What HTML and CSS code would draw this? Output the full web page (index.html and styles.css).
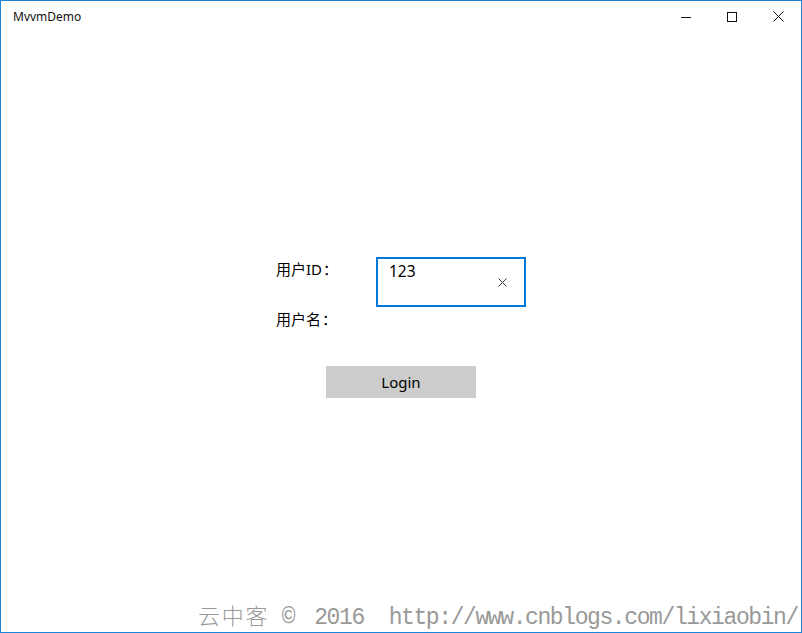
FILE: index.html
```html
<!DOCTYPE html>
<html lang="zh-CN">
<head>
    <meta charset="UTF-8">
    <title>MvvmDemo</title>
    <link rel="stylesheet" href="styles.css">
</head>
<body>
<div class="window">
    <div class="titlebar">
        <span class="title">MvvmDemo</span>
        <div class="controls">
            <span class="ctrl"><svg width="10" height="10" viewBox="0 0 10 10"><path d="M0 5.5H10" stroke="#111" stroke-width="1"/></svg></span>
            <span class="ctrl"><svg width="10" height="10" viewBox="0 0 10 10"><rect x="0.5" y="0.5" width="9" height="9" fill="none" stroke="#111" stroke-width="1"/></svg></span>
            <span class="ctrl"><svg width="11" height="11" viewBox="0 0 11 11"><path d="M0.5 0.5L10.5 10.5M10.5 0.5L0.5 10.5" stroke="#111" stroke-width="1"/></svg></span>
        </div>
    </div>
    <div class="content">
        <div class="form">
            <div class="row">
                <label class="label">用户ID<span class="colon">：</span></label>
                <div class="textbox">
                    <span class="value">123</span>
                    <svg class="clear" width="9" height="9" viewBox="0 0 9 9"><path d="M0.5 0.5L8.5 8.5M8.5 0.5L0.5 8.5" stroke="#333" stroke-width="1"/></svg>
                </div>
            </div>
            <div class="row row2">
                <label class="label">用户名<span class="colon">：</span></label>
            </div>
            <div class="btnrow">
                <button class="login">Login</button>
            </div>
        </div>
    </div>
    <div class="watermark"><span class="cjk">云中客</span> <span class="copy">©</span> 2016  http://www.cnblogs.com/lixiaobin/</div>
</div>
</body>
</html>
```

FILE: styles.css
```css
*{margin:0;padding:0;box-sizing:border-box;}
body{width:802px;height:633px;overflow:hidden;background:#fff;font-family:"Noto Sans","Noto Sans CJK SC",sans-serif;color:#000;}
.window{position:relative;width:802px;height:633px;border:1px solid #1a84d8;background:#fff;}
.titlebar{height:31px;display:flex;align-items:center;justify-content:space-between;}
.title{padding-left:12px;font-size:12px;color:#111;line-height:31px;}
.controls{display:flex;height:31px;}
.ctrl{width:46px;height:31px;display:flex;align-items:center;justify-content:center;}
.content{padding-top:225px;}
.form{width:250px;margin:0 auto;}
.row{display:flex;height:50px;}
.label{width:100px;font-size:15px;line-height:20px;padding-top:2px;}
.colon{font-family:"Noto Sans CJK TC",sans-serif;margin-left:1px;}
.textbox{width:150px;height:50px;border:2px solid #0078d7;display:flex;justify-content:space-between;padding:2px 17px 0 11px;position:relative;}
.value{font-size:15.5px;line-height:20px;}
.clear{margin-top:17px;}
.row2{height:59px;}
.btnrow{display:flex;justify-content:center;}
.login{width:150px;height:32px;border:none;background:#ccc;font-family:"Noto Sans",sans-serif;font-size:15px;color:#000;}
.watermark{position:absolute;left:197px;top:604px;font-family:"Liberation Mono","Noto Sans CJK SC",monospace;font-size:23px;line-height:26px;letter-spacing:-1.4px;color:#999;white-space:pre;}
.cjk{letter-spacing:1.8px;font-weight:300;font-size:22px;}
.copy{display:inline-block;width:20px;}
```
